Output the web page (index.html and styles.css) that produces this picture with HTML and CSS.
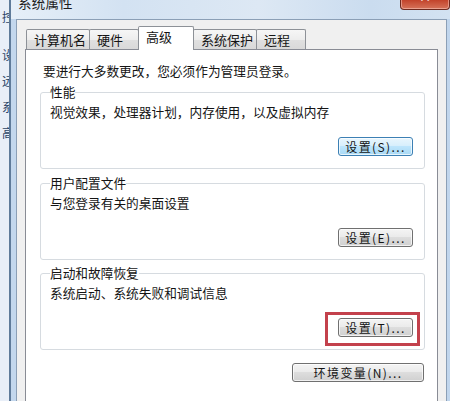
FILE: index.html
```html
<!DOCTYPE html>
<html lang="zh-CN">
<head>
<meta charset="utf-8">
<title>系统属性</title>
<link rel="stylesheet" href="styles.css">
</head>
<body>
<div class="screen">
  <div class="bgwin">
    <ul class="nav">
      <li class="nav-home">控制面板主页</li>
      <li>设备管理器</li>
      <li>远程设置</li>
      <li>系统保护</li>
      <li>高级系统设置</li>
    </ul>
  </div>
  <div class="dialog">
    <div class="titlebar">
      <span class="title">系统属性</span>
      <span class="close"><span class="close-x">✕</span></span>
    </div>
    <div class="client">
      <div class="tabs">
        <div class="tab">计算机名</div>
        <div class="tab">硬件</div>
        <div class="tab active">高级</div>
        <div class="tab">系统保护</div>
        <div class="tab">远程</div>
      </div>
      <div class="panel">
        <p class="notice">要进行大多数更改，您必须作为管理员登录。</p>
        <fieldset class="group group-first">
          <legend>性能</legend>
          <p class="desc">视觉效果，处理器计划，内存使用，以及虚拟内存</p>
          <div class="actions"><button class="btn focus">设置(S)...</button></div>
        </fieldset>
        <fieldset class="group">
          <legend>用户配置文件</legend>
          <p class="desc">与您登录有关的桌面设置</p>
          <div class="actions"><button class="btn">设置(E)...</button></div>
        </fieldset>
        <fieldset class="group group-last">
          <legend>启动和故障恢复</legend>
          <p class="desc">系统启动、系统失败和调试信息</p>
          <div class="actions"><span class="mark"><button class="btn">设置(T)...</button></span></div>
        </fieldset>
        <div class="footer"><button class="btn wide">环境变量(N)...</button></div>
      </div>
    </div>
  </div>
</div>
</body>
</html>
```

FILE: styles.css
```css
html, body {
  margin: 0;
  padding: 0;
}
body {
  width: 450px;
  height: 401px;
  overflow: hidden;
  background: #e8eef7;
  font-family: "Noto Sans CJK SC", "Microsoft YaHei", sans-serif;
  color: #141414;
}
.screen {
  display: grid;
  grid-template-columns: 9px 1fr;
  height: 401px;
  overflow: hidden;
}
.bgwin {
  background: #e9eff8;
  overflow: hidden;
}
.nav {
  list-style: none;
  margin: 0;
  padding: 10px 0 0 2px;
  width: 100px;
  font-size: 12px;
  line-height: 14px;
  color: #2c4466;
}
.nav li {
  white-space: nowrap;
  margin-bottom: 12px;
}
.nav .nav-home {
  margin-bottom: 24px;
}

/* dialog window */
.dialog {
  width: 450px;
  margin-top: -11px;
  border-left: 2px solid #5f7b9a;
  background: linear-gradient(90deg, #c3d7ed 0%, #c9dcf0 60%, #c0d5ec 100%);
  min-height: 430px;
}
.titlebar {
  height: 30px;
  display: flex;
  align-items: flex-start;
  padding-left: 7px;
  background: linear-gradient(90deg, #e6eff8 0%, #d3e2f2 25%, #dde8f4 55%, #cadcef 80%, #d4e3f2 100%);
}
.title {
  margin-top: 5px;
  font-size: 13.5px;
  line-height: 16px;
  color: #1c1c1c;
  letter-spacing: 0.2px;
}
.close {
  margin-left: auto;
  margin-right: 11px;
  width: 50px;
  height: 21px;
  box-sizing: border-box;
  border: 1px solid #6e2a1f;
  border-top: none;
  border-radius: 0 0 4px 4px;
  background: linear-gradient(#e79a86 0%, #d2654d 45%, #c2432b 55%, #d6735a 100%);
  display: flex;
  justify-content: center;
  box-shadow: inset 0 0 0 1px rgba(255, 210, 200, 0.5);
  overflow: hidden;
}
.close-x {
  color: #fff;
  font-family: "DejaVu Sans", sans-serif;
  font-weight: bold;
  font-size: 14px;
  line-height: 16px;
  margin-top: 0;
}
.client {
  margin-left: 5px;
  width: 431px;
  box-sizing: border-box;
  border: 1px solid #8b9fb6;
  background: #f0f0f0;
  padding: 6px 8px 0 8px;
  min-height: 400px;
}

/* tabs */
.tabs {
  display: flex;
  align-items: flex-end;
  height: 23px;
  padding-left: 1px;
}
.tab {
  position: relative;
  box-sizing: border-box;
  height: 20px;
  min-width: 50px;
  padding: 0 3px 0 7px;
  border: 1px solid #8d9197;
  border-bottom: none;
  border-radius: 2px 2px 0 0;
  background: linear-gradient(#f6f6f6 0%, #ededed 50%, #e0e0e0 51%, #d9d9d9 100%);
  font-size: 13px;
  line-height: 19px;
  white-space: nowrap;
}
.tab + .tab {
  margin-left: -1px;
}
.tab.active {
  z-index: 1;
  height: 24px;
  min-width: 56px;
  margin-bottom: -1px;
  background: #ffffff;
  line-height: 20px;
}

/* panel */
.panel {
  background: #ffffff;
  border: 1px solid #898c95;
  padding: 13px 12px 0 14px;
  min-height: 380px;
}
.notice {
  margin: 0 0 0 3px;
  font-size: 12.7px;
  line-height: 16px;
}
.group {
  margin: 6px 0 0 0;
  padding: 0 11px 12px 9px;
  border: 1px solid #d6dbe0;
  border-radius: 3px;
}
.group-first {
  margin-top: 5px;
}
.group-last {
  margin-top: 5px;
}
.group legend {
  padding: 0;
  font-size: 12.7px;
  line-height: 16px;
}
.desc {
  margin: 4px 0 0 0;
  font-size: 12.7px;
  line-height: 16px;
}
.actions {
  display: flex;
  justify-content: flex-end;
  margin-top: 17px;
}
.mark {
  display: inline-flex;
  border: 3px solid #c3414c;
  padding: 3px 4px 6px 10px;
  margin: -6px -7px -9px -13px;
}
.btn {
  width: 75px;
  height: 19px;
  box-sizing: border-box;
  padding: 0;
  border: 1px solid #707070;
  border-radius: 3px;
  background: linear-gradient(#f4f4f4 0%, #ebebeb 45%, #dddddd 50%, #d0d0d0 100%);
  box-shadow: inset 0 0 0 1px rgba(255, 255, 255, 0.7);
  font-family: "Noto Sans CJK SC", "Microsoft YaHei", sans-serif;
  font-size: 12px;
  line-height: 16px;
  letter-spacing: 1.4px;
  color: #141414;
  white-space: nowrap;
}
.btn.focus {
  border-color: #3c80b4;
  background: linear-gradient(#e9f6fd 0%, #d8effc 45%, #bde5fc 50%, #a9d9f4 100%);
}
.footer {
  display: flex;
  justify-content: flex-end;
  margin-top: 13px;
  padding-right: 1px;
}
.btn.wide {
  width: 132px;
}
```
